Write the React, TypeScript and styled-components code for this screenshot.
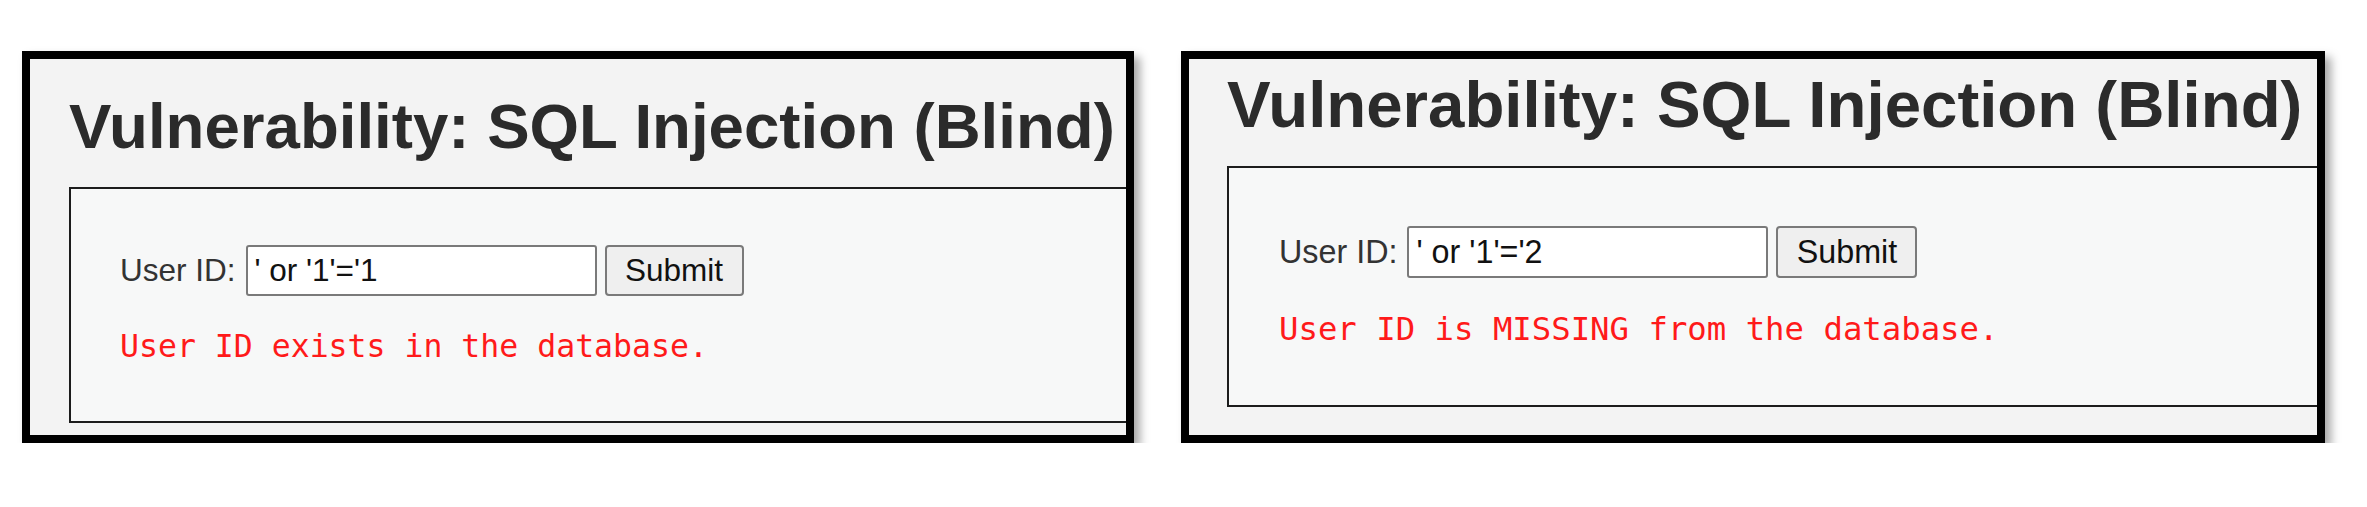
import React from 'react';
import styled, { createGlobalStyle } from 'styled-components';

const GlobalStyle = createGlobalStyle`
  body {
    margin: 0;
    background: #ffffff;
    font-family: 'Liberation Sans', Arial, sans-serif;
  }
`;

const Page = styled.div`
  display: flex;
  align-items: flex-start;
  gap: 47px;
  padding: 51px 0 0 22px;
`;

const Shot = styled.div<{ $w: number }>`
  box-sizing: border-box;
  width: ${(p) => p.$w}px;
  height: 392px;
  border: 8px solid #000;
  background: #f3f3f3;
  overflow: hidden;
  box-shadow: 6px 6px 9px rgba(0, 0, 0, 0.35);
  padding-left: ${(p) => (p.$w > 1120 ? 38 : 39)}px;
`;

const Title = styled.h1<{ $size: number; $top: number }>`
  margin: ${(p) => p.$top}px 0 0 0;
  font-size: ${(p) => p.$size}px;
  line-height: ${(p) => Math.round(p.$size * 1.14)}px;
  font-weight: bold;
  color: #2b2b2b;
  white-space: nowrap;
`;

const Box = styled.div<{ $top: number; $pad: number; $bottom: number }>`
  box-sizing: border-box;
  width: 1200px;
  margin-top: ${(p) => p.$top}px;
  border: 2px solid #1c1c1c;
  background: #f7f8f8;
  padding: ${(p) => p.$pad}px 0 ${(p) => p.$bottom}px ${(p) => (p.$pad > 57 ? 50 : 49)}px;
`;

const Row = styled.form<{ $h: number }>`
  display: flex;
  align-items: center;
  height: ${(p) => p.$h}px;
  margin: 0;
`;

const Label = styled.label<{ $size: number }>`
  font-size: ${(p) => p.$size}px;
  color: #333;
  margin-right: 10px;
`;

const Field = styled.div<{ $w: number; $size: number }>`
  box-sizing: border-box;
  width: ${(p) => p.$w}px;
  height: 100%;
  display: flex;
  align-items: center;
  padding-left: 7px;
  border: 2px solid #7a7a7a;
  border-radius: 3px;
  background: #fff;
  font-size: ${(p) => p.$size}px;
  color: #111;
  white-space: pre;
`;

const Button = styled.div<{ $w: number; $size: number }>`
  box-sizing: border-box;
  width: ${(p) => p.$w}px;
  height: 100%;
  margin-left: 8px;
  display: flex;
  align-items: center;
  justify-content: center;
  border: 2px solid #7a7a7a;
  border-radius: 4px;
  background: #efefef;
  font-size: ${(p) => p.$size}px;
  color: #111;
`;

const Message = styled.pre<{ $size: number; $gap: number }>`
  margin: ${(p) => p.$gap}px 0 0 0;
  font-family: 'DejaVu Sans Mono', monospace;
  font-size: ${(p) => p.$size}px;
  line-height: ${(p) => Math.round(p.$size * 1.16)}px;
  color: #ff1a1a;
`;

type Shot = {
  w: number;
  title: number;
  titleTop: number;
  boxTop: number;
  pad: number;
  bottom: number;
  rowH: number;
  text: number;
  input: number;
  button: number;
  value: string;
  msg: string;
  mono: number;
  msgGap: number;
};

const shots: Shot[] = [
  {
    w: 1112,
    title: 63.6,
    titleTop: 30,
    boxTop: 25,
    pad: 56,
    bottom: 56,
    rowH: 51,
    text: 31.5,
    input: 351,
    button: 139,
    value: "' or '1'='1",
    msg: 'User ID exists in the database.',
    mono: 31.5,
    msgGap: 32,
  },
  {
    w: 1144,
    title: 65.4,
    titleTop: 8,
    boxTop: 24,
    pad: 58,
    bottom: 57,
    rowH: 52,
    text: 32.3,
    input: 361,
    button: 141,
    value: "' or '1'='2",
    msg: 'User ID is MISSING from the database.',
    mono: 32.3,
    msgGap: 33,
  },
];

export default function App() {
  return (
    <>
      <GlobalStyle />
      <Page>
        {shots.map((s, i) => (
          <Shot key={i} $w={s.w}>
            <Title $size={s.title} $top={s.titleTop}>
              Vulnerability: SQL Injection (Blind)
            </Title>
            <Box $top={s.boxTop} $pad={s.pad} $bottom={s.bottom}>
              <Row $h={s.rowH}>
                <Label $size={s.text}>User ID:</Label>
                <Field $w={s.input} $size={s.text}>
                  {s.value}
                </Field>
                <Button $w={s.button} $size={s.text}>
                  Submit
                </Button>
              </Row>
              <Message $size={s.mono} $gap={s.msgGap}>
                {s.msg}
              </Message>
            </Box>
          </Shot>
        ))}
      </Page>
    </>
  );
}
